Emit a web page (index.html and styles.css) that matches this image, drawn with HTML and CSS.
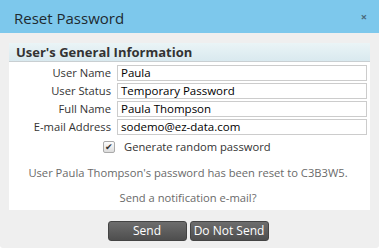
FILE: index.html
```html
<!DOCTYPE html>
<html>
<head>
<meta charset="utf-8">
<link rel="stylesheet" href="styles.css">
</head>
<body>
<div class="dialog">
  <div class="titlebar">
    <span class="title">Reset Password</span>
    <span class="close">×</span>
  </div>
  <div class="content">
    <div class="panel">
      <div class="panel-head">User's General Information</div>
      <div class="panel-body">
        <div class="form">
          <label>User Name</label><div class="field">Paula</div>
          <label>User Status</label><div class="field">Temporary Password</div>
          <label>Full Name</label><div class="field">Paula Thompson</div>
          <label>E-mail Address</label><div class="field">sodemo@ez-data.com</div>
        </div>
        <div class="check-row">
          <span class="checkbox">✔</span>
          <span>Generate random password</span>
        </div>
        <p class="msg">User Paula Thompson's password has been reset to C3B3W5.</p>
        <p class="msg ask">Send a notification e-mail?</p>
      </div>
    </div>
    <div class="buttons">
      <button class="btn">Send</button>
      <button class="btn">Do Not Send</button>
    </div>
  </div>
</div>
</body>
</html>
```
FILE: styles.css
```css
* { box-sizing: border-box; }
html, body { margin: 0; padding: 0; background: #fff; }
body { font-family: "Open Sans", "Noto Sans", sans-serif; font-size: 11.2px; color: #222; }
.dialog { width: 379px; height: 248px; background: #efefef; border-radius: 0 0 3px 3px; overflow: hidden; display: flex; flex-direction: column; }
.titlebar { height: 33px; background: #7dc8ec; display: flex; align-items: center; justify-content: space-between; padding: 0 12px 0 14px; }
.title { font-size: 15px; color: #1e2a30; padding-top: 2px; }
.close { font-size: 11px; color: #4a6a7a; font-weight: bold; }
.content { padding: 10px 9px 0 9px; display: flex; flex-direction: column; }
.panel { background: #fff; }
.panel-head { height: 19px; background: linear-gradient(#eaf4f6, #d9e9ef); border-bottom: 1px solid #c9cfd2; font-weight: bold; font-size: 13px; color: #333; padding-left: 7px; line-height: 19px; }
.panel-body { padding: 3px 3px 5px 0; }
.form { display: grid; grid-template-columns: 102px 1fr; column-gap: 6px; row-gap: 2px; }
.form label { text-align: right; color: #333; line-height: 16px; }
.field { height: 16px; border: 1px solid #ccc; padding-left: 3px; line-height: 14px; color: #000; font-size: 11.5px; }
.check-row { display: flex; align-items: center; margin: 4px 0 0 94px; color: #333; }
.checkbox { width: 12px; height: 12px; border: 1px solid #aaa; border-radius: 2px; background: linear-gradient(#fdfdfd, #dcdcdc); font-size: 9px; line-height: 10px; text-align: center; color: #333; margin-right: 9px; }
.msg { margin: 11px 0 0 0; text-align: center; color: #6a6a6a; }
.msg.ask { margin-top: 10px; }
.buttons { display: flex; justify-content: center; gap: 3px; margin-top: 11px; padding-right: 3px; }
.btn { width: 79px; height: 20px; border: 1px solid #444; border-radius: 3px; background: linear-gradient(#6d6d6d, #4e4e4e); color: #fff; font-family: "Open Sans", "Noto Sans", sans-serif; font-size: 12px; padding: 0; line-height: 18px; }
```
